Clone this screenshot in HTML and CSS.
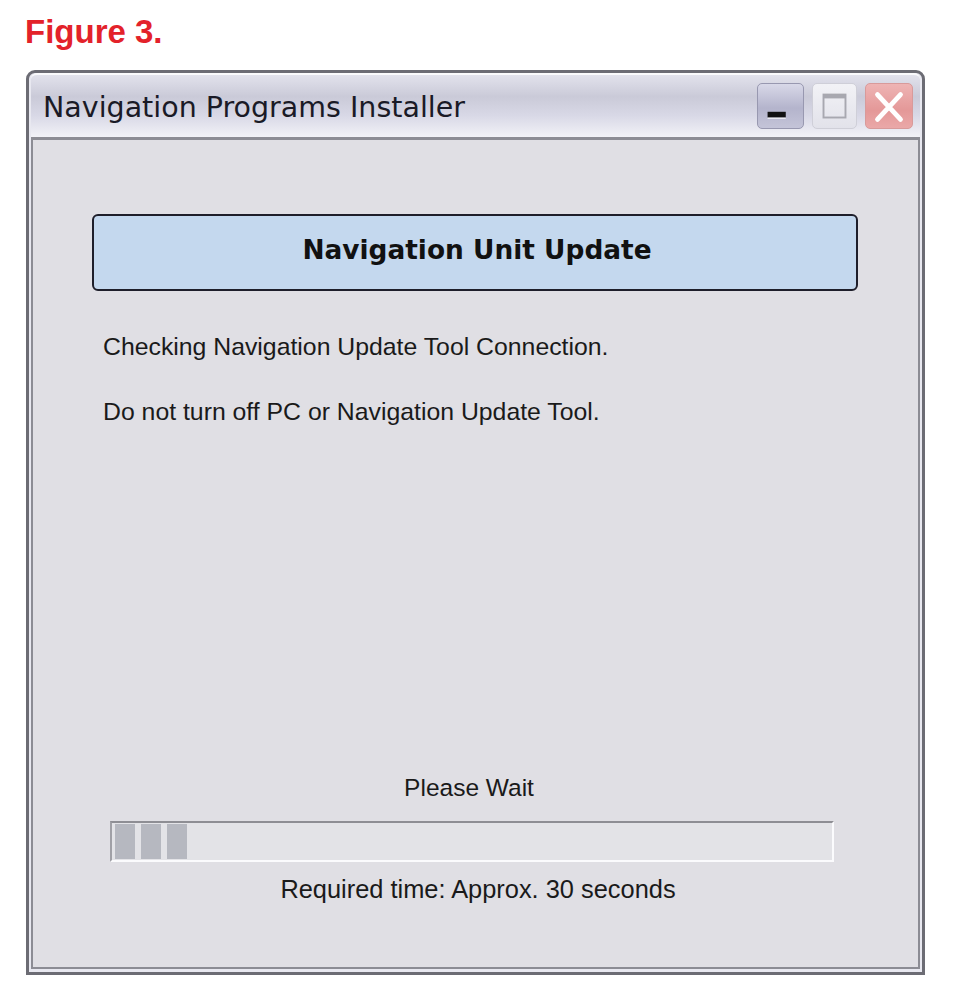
FILE: index.html
```html
<!DOCTYPE html>
<html lang="en">
<head>
  <meta charset="UTF-8" />
  <title>Figure 3 – Navigation Programs Installer</title>
  <link rel="stylesheet" href="styles.css">
</head>
<body>

  <div class="figure-label">Figure 3.</div>

  <div class="window">
    <div class="title-bar">
      <span class="title-text">Navigation Programs Installer</span>
      <div class="title-buttons">
        <div class="tb-btn tb-min">
          <svg width="47" height="46" viewBox="0 0 47 46">
            <rect x="10" y="28" width="19" height="6" fill="#111" />
            <rect x="10" y="34" width="19" height="1.5" fill="#fff" opacity="0.7" />
          </svg>
        </div>
        <div class="tb-btn tb-max">
          <svg width="45" height="46" viewBox="0 0 45 46">
            <rect x="11" y="10" width="23" height="24" fill="none" stroke="#a8a8b0" stroke-width="2" />
            <rect x="11" y="10" width="23" height="4" fill="#a8a8b0" />
          </svg>
        </div>
        <div class="tb-btn tb-close">
          <svg width="48" height="46" viewBox="0 0 48 46">
            <path d="M12 10 L36 36 M36 10 L12 36" stroke="#fff" stroke-width="5" stroke-linecap="round" />
          </svg>
        </div>
      </div>
    </div>

    <div class="client">
      <div class="header-box">Navigation Unit Update</div>

      <p class="message">Checking Navigation Update Tool Connection.</p>
      <p class="message">Do not turn off PC or Navigation Update Tool.</p>

      <div class="wait-area">
        <div class="wait-label">Please Wait</div>
        <div class="progress">
          <span class="block"></span>
          <span class="block"></span>
          <span class="block"></span>
        </div>
        <div class="wait-time">Required time: Approx. 30 seconds</div>
      </div>
    </div>
  </div>

</body>
</html>
```

FILE: styles.css
```css
body {
  margin: 0;
  padding: 0;
  background: #fff;
  font-family: 'Liberation Sans', Arial, sans-serif;
}

.figure-label {
  color: #e3222a;
  font-weight: bold;
  font-size: 33px;
  line-height: 38px;
  padding: 13px 0 0 25px;
  height: 57px;
  box-sizing: border-box;
}

.window {
  margin: 13px 0 0 26px;
  width: 899px;
  height: 905px;
  box-sizing: border-box;
  border: 3px solid #6c6c74;
  border-radius: 9px 9px 0 0;
  background: #e8e8f0;
  padding: 0 2px 3px 2px;
  display: flex;
  flex-direction: column;
}

.title-bar {
  height: 62px;
  flex: none;
  display: flex;
  align-items: center;
  justify-content: space-between;
  padding: 0 7px 0 12px;
  border-top: 2px solid #fafafc;
  border-radius: 6px 6px 0 0;
  background: linear-gradient(to bottom, #e2e2ec 0%, #cacad8 35%, #d8d8e6 65%, #f2f2f7 100%);
}

.title-text {
  font-family: 'DejaVu Sans', sans-serif;
  font-size: 28.5px;
  color: #1a1a26;
  padding-top: 2px;
}

.title-buttons {
  display: flex;
  gap: 8px;
}

.tb-btn {
  height: 46px;
  border-radius: 5px;
  border: 1px solid #b8b8c8;
  box-sizing: border-box;
  display: flex;
}

.tb-min {
  width: 47px;
  background: linear-gradient(to bottom, #d8d8e8 0%, #b4b4cc 55%, #c4c4d8 100%);
  border-color: #9898b0;
}

.tb-max {
  width: 45px;
  background: linear-gradient(to bottom, #f2f2f6 0%, #e2e2ea 100%);
  border-color: #cfcfd8;
}

.tb-close {
  width: 48px;
  background: linear-gradient(to bottom, #eeb4b4 0%, #e49898 60%, #eaa8a8 100%);
  border-color: #d89a9a;
}

.client {
  flex: 1;
  border: 2px solid #8c8c94;
  border-top-width: 3px;
  background: #e0dfe4;
  display: flex;
  flex-direction: column;
  padding: 0 60px 0 59px;
}

.header-box {
  margin-top: 74px;
  height: 77px;
  box-sizing: border-box;
  border: 2px solid #1e1e2a;
  border-radius: 6px;
  background: #c4d8ee;
  display: flex;
  align-items: center;
  justify-content: center;
  font-family: 'DejaVu Sans', sans-serif;
  font-weight: bold;
  font-size: 26.4px;
  color: #111;
  padding: 0 0 6px 4px;
}

.message {
  margin: 0;
  padding-left: 11px;
  font-size: 24.8px;
  line-height: 30px;
  color: #1a1a1a;
}

.header-box + .message {
  margin-top: 41px;
}

.message + .message {
  margin-top: 35px;
}

.wait-area {
  margin-top: auto;
  padding: 0 24px 63px 18px;
  display: flex;
  flex-direction: column;
  align-items: center;
}

.wait-label,
.wait-time {
  font-size: 24.5px;
  line-height: 30px;
  color: #1a1a1a;
}

.wait-label {
  margin-bottom: 18px;
  padding-right: 6px;
}

.wait-time {
  margin-top: 12px;
  padding-left: 12px;
  font-size: 25.4px;
}

.progress {
  align-self: stretch;
  height: 41px;
  box-sizing: border-box;
  border-top: 2px solid #8e8e94;
  border-left: 2px solid #a0a0a6;
  border-bottom: 2px solid #fbfbfd;
  border-right: 2px solid #fbfbfd;
  background: #e3e3e7;
  display: flex;
  gap: 6px;
  padding: 1px 3px;
}

.block {
  width: 20px;
  background: #b6b8c0;
}
```
